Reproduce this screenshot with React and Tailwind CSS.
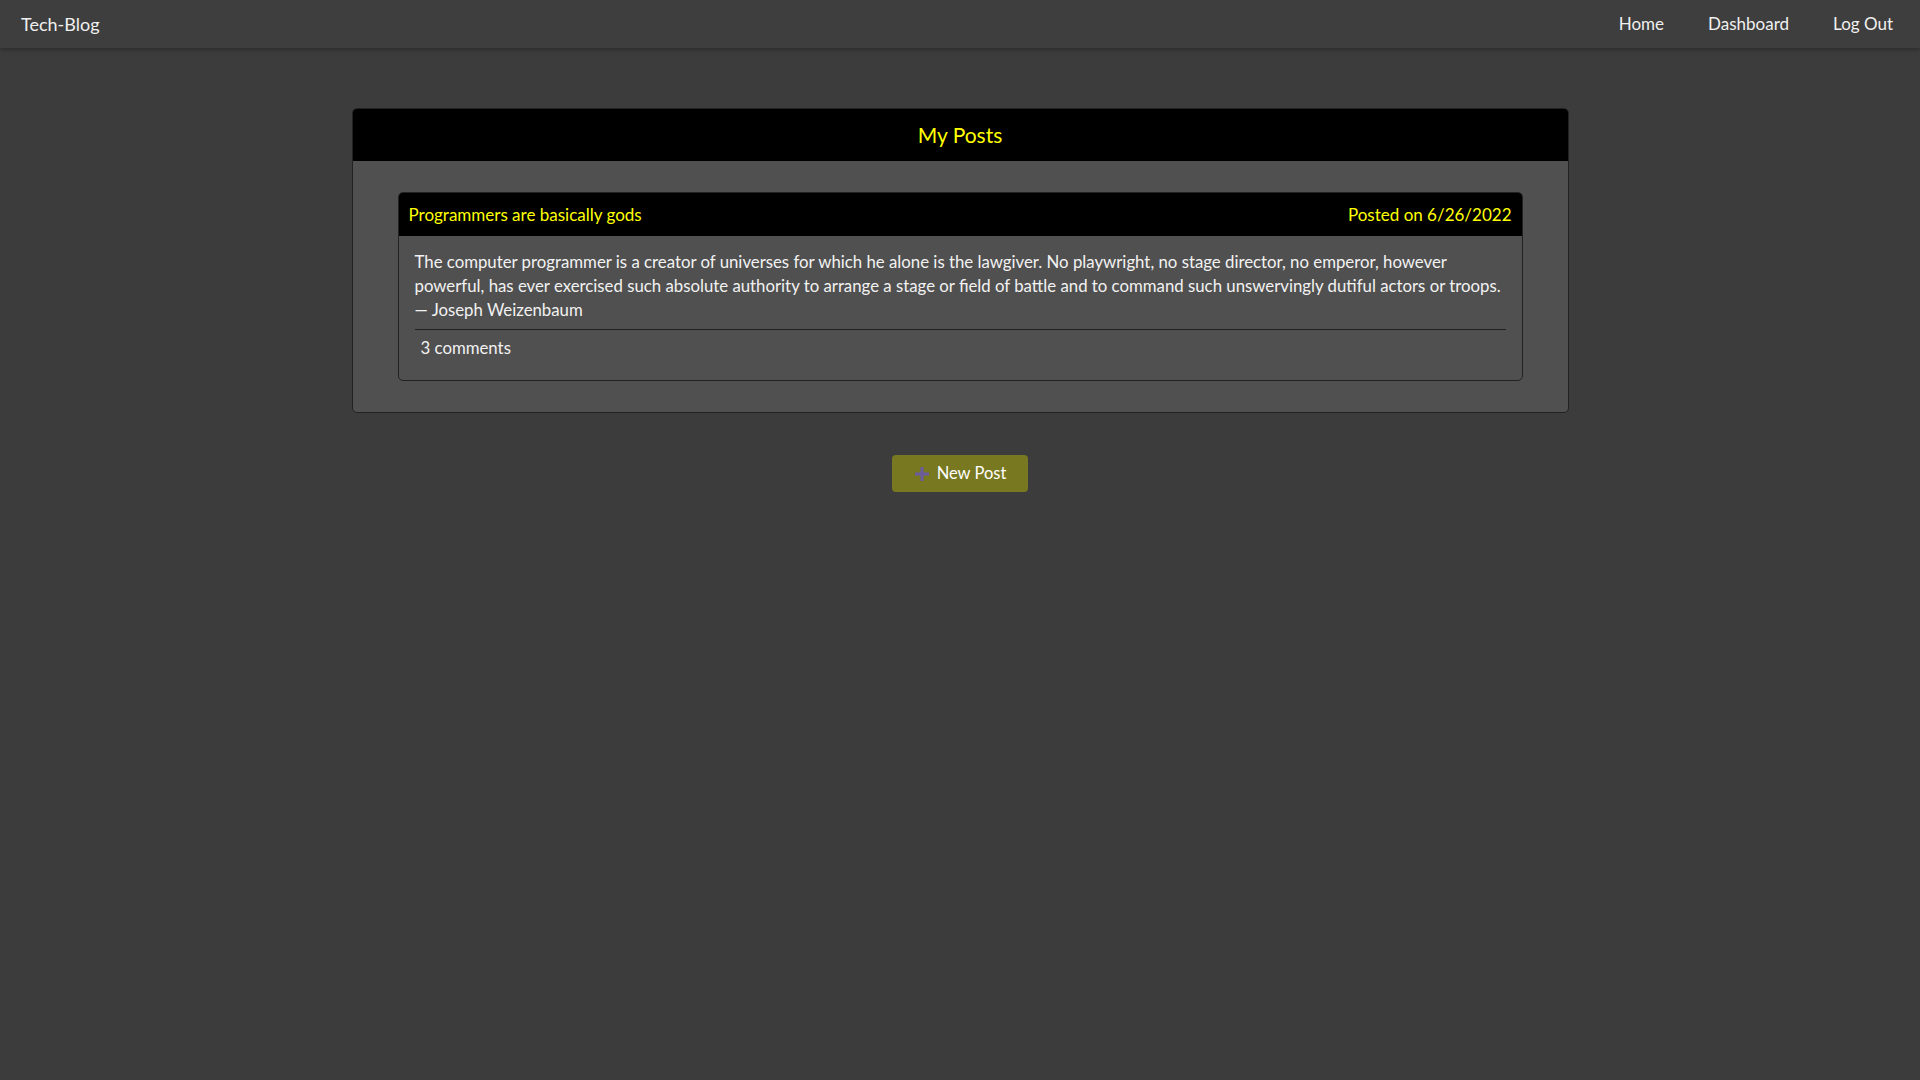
import React from 'react';

const PlusIcon = () => (
  <svg className="w-4 h-4" viewBox="0 0 16 16" fill="none" stroke="currentColor" strokeWidth="3" strokeLinecap="butt">
    <path d="M8 1v14M1 8h14" />
  </svg>
);

const App = () => {
  return (
    <div className="min-h-screen bg-[#3c3c3c] text-[#f2f2f2]" style={{ fontFamily: 'Lato, "Open Sans", sans-serif' }}>
      {/* Navbar */}
      <nav className="h-12 bg-[#3e3e3e] shadow-[0_2px_4px_rgba(0,0,0,0.25)] flex items-center justify-between pl-[21px] pr-[27px] text-[17px]">
        <a href="#" className="text-[18px] text-[#f0f0f0]">Tech-Blog</a>
        <div className="flex items-center gap-[44px]">
          <a href="#" className="text-[#f0f0f0]">Home</a>
          <a href="#" className="text-[#f0f0f0]">Dashboard</a>
          <a href="#" className="text-[#f0f0f0]">Log Out</a>
        </div>
      </nav>

      <main className="pt-[60px] flex flex-col items-center">
        {/* My Posts card */}
        <section className="w-[1217px] rounded-[5px] border border-[#222] bg-[#505050] overflow-hidden">
          <div className="h-[52px] bg-black flex items-center justify-center text-[21px] text-[#ffff00]">
            My Posts
          </div>
          <div className="px-[45px] py-[31px]">
            <article className="rounded-[5px] border border-[#222] overflow-hidden">
              <div className="h-[43px] bg-black flex items-center justify-between px-[10px] text-[17px] text-[#ffff00]">
                <span>Programmers are basically gods</span>
                <span>Posted on 6/26/2022</span>
              </div>
              <div className="px-4 pt-[14px] pb-[20px]">
                <p className="text-[16.8px] leading-[24px] text-[#f2f2f2]">
                  The computer programmer is a creator of universes for which he alone is the lawgiver. No playwright, no stage director, no emperor, however
                  <br />
                  powerful, has ever exercised such absolute authority to arrange a stage or field of battle and to command such unswervingly dutiful actors or troops.
                  <br />
                  — Joseph Weizenbaum
                </p>
                <div className="mt-[7px] border-t border-[#222]"></div>
                <p className="pt-[6px] pl-[6px] text-[16.8px] leading-[24px]">3 comments</p>
              </div>
            </article>
          </div>
        </section>

        {/* New Post button */}
        <button className="mt-[42px] w-[136px] h-[37px] rounded-[4px] bg-[#787821] flex items-center justify-center gap-[7px] text-[16.5px] text-white">
          <span className="text-[#6a5c9e]"><PlusIcon /></span>
          New Post
        </button>
      </main>
    </div>
  );
};

export default App;
